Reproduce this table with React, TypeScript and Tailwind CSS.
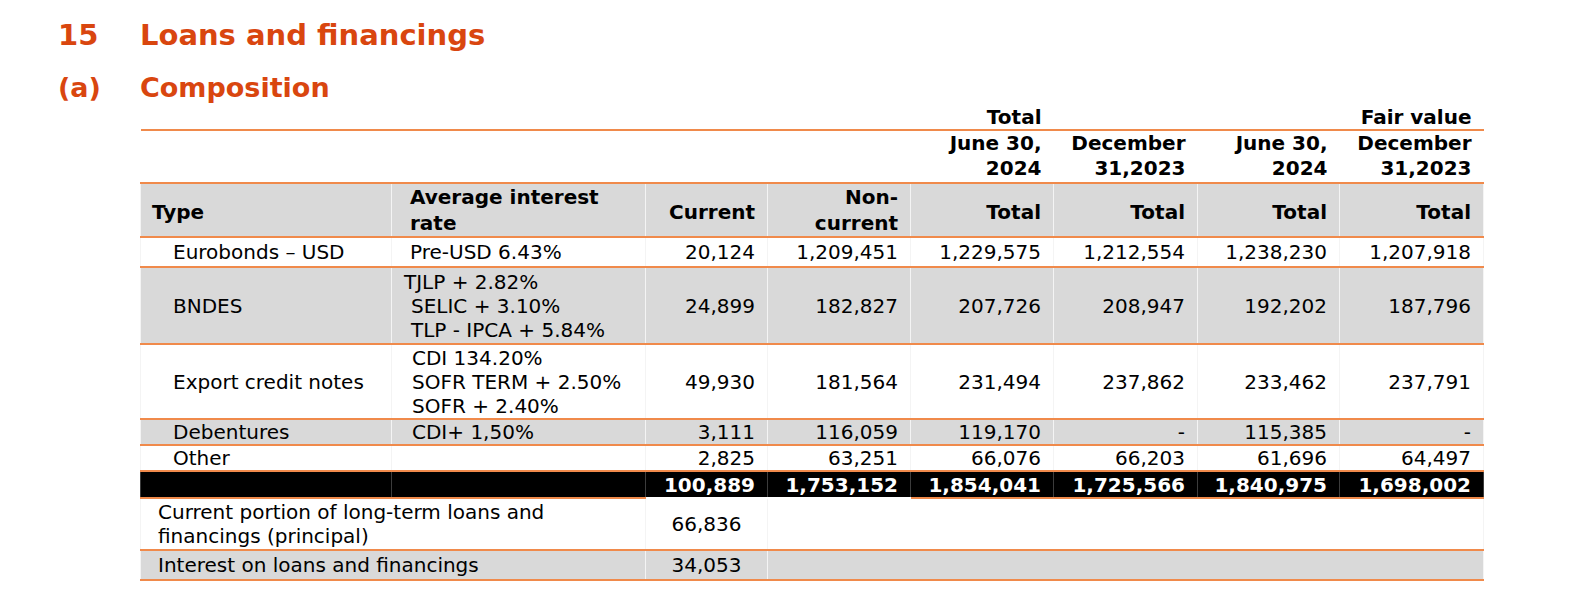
import React from 'react'

type Row = {
  type: string
  rate: { text: string; indent: string }[]
  vals: string[]
  gray: boolean
  h: string
}

const rows: Row[] = [
  {
    type: 'Eurobonds – USD',
    rate: [{ text: 'Pre-USD 6.43%', indent: 'pl-[18px]' }],
    vals: ['20,124', '1,209,451', '1,229,575', '1,212,554', '1,238,230', '1,207,918'],
    gray: false,
    h: 'h-[30px]',
  },
  {
    type: 'BNDES',
    rate: [
      { text: 'TJLP + 2.82%', indent: 'pl-[12px]' },
      { text: 'SELIC + 3.10%', indent: 'pl-[19px]' },
      { text: 'TLP - IPCA + 5.84%', indent: 'pl-[19px]' },
    ],
    vals: ['24,899', '182,827', '207,726', '208,947', '192,202', '187,796'],
    gray: true,
    h: 'h-[77px]',
  },
  {
    type: 'Export credit notes',
    rate: [
      { text: 'CDI 134.20%', indent: 'pl-[20px]' },
      { text: 'SOFR TERM + 2.50%', indent: 'pl-[20px]' },
      { text: 'SOFR + 2.40%', indent: 'pl-[20px]' },
    ],
    vals: ['49,930', '181,564', '231,494', '237,862', '233,462', '237,791'],
    gray: false,
    h: 'h-[75px]',
  },
  {
    type: 'Debentures',
    rate: [{ text: 'CDI+ 1,50%', indent: 'pl-[20px]' }],
    vals: ['3,111', '116,059', '119,170', '-', '115,385', '-'],
    gray: true,
    h: 'h-[26px]',
  },
  {
    type: 'Other',
    rate: [],
    vals: ['2,825', '63,251', '66,076', '66,203', '61,696', '64,497'],
    gray: false,
    h: 'h-[26px]',
  },
]

const totals = ['100,889', '1,753,152', '1,854,041', '1,725,566', '1,840,975', '1,698,002']

// shared cell borders: orange rule under every row, faint column separators
const cell = 'border-b-2 border-b-[#f08a4b] border-x border-x-[#f4f4f4] p-0'

export default function App() {
  return (
    <div className="w-[1574px] h-[608px] bg-white text-black font-['DejaVu_Sans',Verdana,sans-serif] overflow-hidden">
      {/* Headings */}
      <div className="pt-[18px] text-[#d9460f] font-bold">
        <div className="flex h-[34px] items-center text-[29px] leading-[34px]">
          <span className="w-[140px] pl-[58px]">15</span>
          <span>Loans and financings</span>
        </div>
        <div className="mt-[20px] flex h-[32px] items-center text-[27px] leading-[32px]">
          <span className="w-[140px] pl-[58px]">(a)</span>
          <span>Composition</span>
        </div>
      </div>

      <table className="ml-[140px] w-[1343px] table-fixed border-collapse text-[20px] leading-[24px]">
        <colgroup>
          <col className="w-[251px]" />
          <col className="w-[254px]" />
          <col className="w-[122px]" />
          <col className="w-[143px]" />
          <col className="w-[143px]" />
          <col className="w-[144px]" />
          <col className="w-[142px]" />
          <col className="w-[144px]" />
        </colgroup>
        <tbody>
          {/* Group titles */}
          <tr className="h-[26px] font-bold">
            <td className="border-b-2 border-b-[#f08a4b] p-0" colSpan={4} />
            <td className="border-b-2 border-b-[#f08a4b] p-0 pr-3 text-right align-bottom">Total</td>
            <td className="border-b-2 border-b-[#f08a4b] p-0" colSpan={2} />
            <td className="border-b-2 border-b-[#f08a4b] p-0 pr-3 text-right align-bottom">Fair value</td>
          </tr>

          {/* Dates */}
          <tr className="h-[52px] font-bold leading-[25px]">
            <td className="border-b-2 border-b-[#f08a4b] p-0" colSpan={4} />
            {['June 30,|2024', 'December|31,2023', 'June 30,|2024', 'December|31,2023'].map((d, i) => (
              <td key={i} className="border-b-2 border-b-[#f08a4b] p-0 pr-3 pb-px text-right align-bottom">
                {d.split('|')[0]}
                <br />
                {d.split('|')[1]}
              </td>
            ))}
          </tr>

          {/* Column header */}
          <tr className="h-[51px] bg-[#d9d9d9] font-bold leading-[26px]">
            <td className={`${cell} pl-[11px] pt-[3px]`}>Type</td>
            <td className={`${cell} pl-[18px]`}>
              Average interest
              <br />
              rate
            </td>
            <td className={`${cell} pr-3 pt-[3px] text-right`}>Current</td>
            <td className={`${cell} pr-3 text-right`}>
              Non-
              <br />
              current
            </td>
            {[0, 1, 2, 3].map((i) => (
              <td key={i} className={`${cell} pr-3 pt-[3px] text-right`}>
                Total
              </td>
            ))}
          </tr>

          {/* Loans */}
          {rows.map((r) => (
            <tr key={r.type} className={`${r.h} ${r.gray ? 'bg-[#d9d9d9]' : 'bg-white'}`}>
              <td className={`${cell} pl-[32px]`}>{r.type}</td>
              <td className={cell}>
                {r.rate.map((l) => (
                  <div key={l.text} className={l.indent}>
                    {l.text}
                  </div>
                ))}
              </td>
              {r.vals.map((v, i) => (
                <td key={i} className={`${cell} pr-3 text-right`}>
                  {v}
                </td>
              ))}
            </tr>
          ))}

          {/* Total */}
          <tr className="h-[27px] bg-black font-bold text-white">
            <td className="border-b-2 border-b-[#f08a4b] border-x border-x-[#3c3c3c] p-0" />
            <td className="border-b-2 border-b-[#f08a4b] border-x border-x-[#3c3c3c] p-0" />
            {totals.map((v, i) => (
              <td
                key={i}
                className={`border-x border-x-[#3c3c3c] p-0 pr-3 text-right ${
                  i < 2 ? 'border-b-2 border-b-white' : 'border-b-2 border-b-[#f08a4b]'
                }`}
              >
                {v}
              </td>
            ))}
          </tr>

          {/* Breakdown */}
          <tr className="h-[52px] bg-white">
            <td className={`${cell} pl-[17px]`} colSpan={2}>
              Current portion of long-term loans and
              <br />
              financings (principal)
            </td>
            <td className={`${cell} text-center`}>66,836</td>
            <td className={cell} colSpan={5} />
          </tr>
          <tr className="h-[30px] bg-[#d9d9d9]">
            <td className={`${cell} pl-[17px]`} colSpan={2}>
              Interest on loans and financings
            </td>
            <td className={`${cell} text-center`}>34,053</td>
            <td className={cell} colSpan={5} />
          </tr>
        </tbody>
      </table>
    </div>
  )
}
